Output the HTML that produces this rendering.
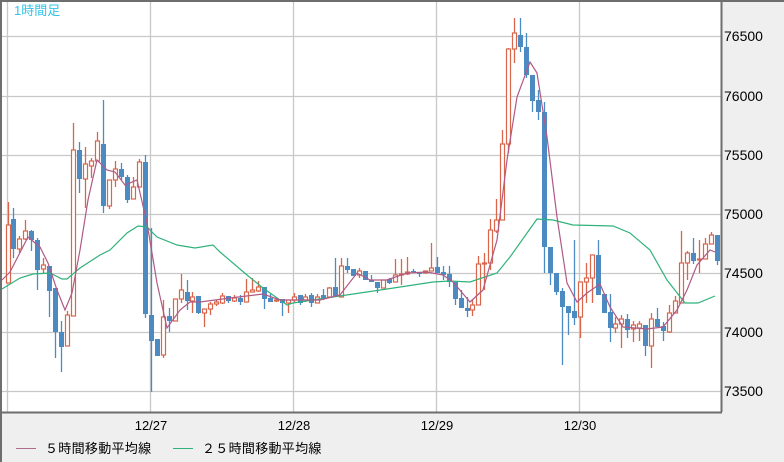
<!DOCTYPE html>
<html><head><meta charset="utf-8"><style>
html,body{margin:0;padding:0;background:#efefef;}
body{width:784px;height:462px;overflow:hidden;position:relative;font-family:"Liberation Sans","Noto Sans CJK JP",sans-serif;}
svg{position:absolute;left:0;top:0;}
</style></head><body>
<svg id="s" width="784" height="462" xmlns="http://www.w3.org/2000/svg">
<rect x="0" y="0" width="784" height="462" fill="#efefef"/>
<rect x="2" y="2" width="719" height="410" fill="#ffffff"/>
<g stroke="#c8c8c8" stroke-width="1.3">
<line x1="2" y1="36.5" x2="721" y2="36.5"/>
<line x1="2" y1="96.5" x2="721" y2="96.5"/>
<line x1="2" y1="155.5" x2="721" y2="155.5"/>
<line x1="2" y1="214.5" x2="721" y2="214.5"/>
<line x1="2" y1="273.5" x2="721" y2="273.5"/>
<line x1="2" y1="332.5" x2="721" y2="332.5"/>
<line x1="2" y1="391.5" x2="721" y2="391.5"/>
<line x1="7.5" y1="2" x2="7.5" y2="412"/>
<line x1="150.5" y1="2" x2="150.5" y2="412"/>
<line x1="293.5" y1="2" x2="293.5" y2="412"/>
<line x1="436.5" y1="2" x2="436.5" y2="412"/>
<line x1="579.5" y1="2" x2="579.5" y2="412"/>
</g>
<g id="c"></g>
<polyline fill="none" stroke="#2fb27a" stroke-width="1.2" points="2,289 20,278 33,274 50,273 62,279 67,279 80,268 100,255 110,250 127,233 138,226 147,227 157,237 177,245 195,248 213,245 220,252 247,275 263,288 287,305 293,303 333,297 387,289 433,282 450,281 470,282 497,273 510,257 537,219 553,220 573,225 613,226 630,233 650,250 667,280 685,303 698,303 715,296"/>
<polyline fill="none" stroke="#b05a86" stroke-width="1.2" points="2,280 10,272 28,237 40,247 48,263 57,290 65,310 72,293 80,250 88,200 97,160 107,170 115,172 125,185 137,180 147,223 157,283 167,328 180,310 190,302 200,302 230,298 263,294 280,300 293,300 320,300 340,295 357,273 370,280 387,280 407,273 427,272 443,275 453,282 470,302 483,290 497,240 507,160 517,97 530,62 537,73 547,137 557,217 567,283 577,302 587,293 600,284 610,307 623,327 647,329 663,327 677,310 687,290 697,265 710,250 715,252"/>
<g stroke="#6e6e6e" stroke-width="2" fill="none">
<line x1="0" y1="1" x2="784" y2="1"/>
<line x1="1" y1="0" x2="1" y2="462"/>
<line x1="721.5" y1="2" x2="721.5" y2="412"/>
<line x1="2" y1="412.5" x2="722" y2="412.5"/>
</g>
<text x="14" y="15" font-size="13" fill="#33c3e8" font-family="Liberation Sans,Noto Sans CJK JP,sans-serif">1時間足</text>
<g font-size="14" fill="#000" font-family="Liberation Sans,sans-serif">
<text x="724" y="41">76500</text>
<text x="724" y="101">76000</text>
<text x="724" y="160">75500</text>
<text x="724" y="219">75000</text>
<text x="724" y="278">74500</text>
<text x="724" y="337">74000</text>
<text x="724" y="396">73500</text>
</g>
<g font-size="13" fill="#000" font-family="Liberation Sans,sans-serif" text-anchor="middle">
<text x="151" y="430">12/27</text>
<text x="294" y="430">12/28</text>
<text x="437" y="430">12/29</text>
<text x="580" y="430">12/30</text>
</g>
<line x1="16" y1="448.5" x2="36" y2="448.5" stroke="#b06a8a" stroke-width="1"/>
<line x1="173" y1="448.5" x2="193" y2="448.5" stroke="#2fb27a" stroke-width="1"/>
<g font-size="13" fill="#000" font-family="Liberation Sans,Noto Sans CJK JP,sans-serif">
<text x="45" y="453" letter-spacing="0.3">５時間移動平均線</text>
<text x="202" y="453" letter-spacing="0.3">２５時間移動平均線</text>
</g>
</svg>
<script>
var D=[
[8,'u',225,283,202,283],[13,'d',219,249,208,258],[19,'u',239,249,236,253],[25,'u',231,239,220,240],[31,'d',231,240,230,251],[37,'d',240,270,238,290],[43,'u',265,269,258,273],[49,'d',266,291,266,317],[55,'d',288,332,288,358],[61,'d',332,347,321,372],[67,'u',315,346,311,346],[73,'u',150,316,123,316],[79,'d',150,179,142,193],[85,'u',164,179,147,208],[91,'u',161,166,158,178],[97,'u',141,161,132,161],[103,'d',144,206,100,213],[109,'u',180,206,180,209],[115,'u',169,180,161,187],[121,'d',169,177,163,180],[127,'d',177,200,175,203],[133,'u',187,199,177,199],[139,'u',162,187,159,187],[145,'d',162,314,155,318],[151,'d',315,341,228,392],[157,'d',339,356,339,356],[163,'u',317,355,300,358],[169,'d',316,321,308,332],[175,'u',299,321,299,321],[181,'u',290,299,274,303],[187,'d',292,301,280,310],[192,'u',297,301,292,313],[198,'d',296,313,296,314],[204,'u',309,313,309,327],[210,'u',304,309,302,315],[216,'u',302,304,300,306],[222,'u',296,303,293,304],[228,'d',296,301,296,303],[234,'u',298,301,295,302],[240,'d',298,302,295,305],[246,'u',292,302,279,302],[252,'u',290,292,278,292],[258,'u',287,291,281,292],[264,'d',287,299,287,309],[270,'d',298,302,294,302],[276,'u',300,301,298,302],[282,'d',299,303,299,316],[288,'u',300,303,300,313],[294,'u',297,300,293,302],[300,'d',295,303,295,305],[305,'u',297,300,294,302],[311,'d',295,303,293,307],[317,'u',297,303,294,303],[323,'d',295,298,289,300],[329,'u',288,297,287,298],[335,'d',287,297,258,297],[341,'u',266,297,258,297],[347,'d',266,270,258,273],[353,'d',269,276,269,276],[359,'u',271,275,268,278],[365,'d',271,280,271,280],[371,'d',280,282,275,282],[377,'d',282,288,282,293],[383,'u',280,288,280,288],[389,'d',279,283,278,284],[395,'u',275,282,259,282],[401,'u',274,275,259,285],[407,'u',272,274,257,275],[413,'d',271,272,269,273],[419,'d',272,274,272,277],[425,'u',271,273,271,273],[431,'u',268,271,243,271],[437,'d',267,273,257,273],[443,'d',272,275,266,280],[449,'d',274,282,266,287],[455,'d',282,299,282,305],[461,'d',298,308,290,308],[467,'d',308,311,297,317],[472,'u',305,310,300,316],[478,'u',264,305,256,305],[484,'u',263,264,253,290],[490,'u',230,263,219,270],[496,'u',220,231,199,233],[502,'u',144,220,130,220],[508,'u',49,144,48,153],[514,'u',33,49,18,63],[520,'d',35,47,18,52],[526,'d',47,75,33,78],[532,'d',75,101,75,112],[538,'d',100,112,90,120],[544,'d',112,247,102,273],[550,'d',247,273,247,285],[556,'d',273,292,273,295],[562,'d',291,307,288,365],[568,'d',306,313,306,335],[574,'d',311,318,240,325],[580,'u',282,317,282,338],[586,'u',278,282,263,303],[592,'u',255,278,255,303],[598,'d',255,295,240,295],[604,'d',294,313,294,313],[610,'d',312,328,294,342],[615,'u',324,328,317,333],[621,'u',319,324,315,348],[627,'d',319,330,314,338],[633,'u',325,329,321,342],[639,'u',324,328,321,341],[645,'d',325,346,325,356],[651,'u',319,346,313,368],[657,'d',319,327,308,327],[663,'d',326,331,322,341],[669,'u',313,332,305,333],[675,'u',301,313,296,313],[681,'u',263,303,231,303],[687,'u',253,263,251,280],[693,'d',253,261,238,264],[699,'u',259,260,240,273],[705,'u',244,259,238,259],[711,'u',235,244,232,244],[717,'d',235,261,235,265]];
var g=document.getElementById('c'),ns='http://www.w3.org/2000/svg',h='';
D.forEach(function(c){var x=c[0],col=c[1]=='u'?'#d9654b':'#4b8bc2';
h+='<line x1="'+(x+0.5)+'" x2="'+(x+0.5)+'" y1="'+c[4]+'" y2="'+c[5]+'" stroke="'+col+'" stroke-width="1.3"/>';
var t=c[2],b=Math.max(c[3],c[2]+1);
if(c[1]=='u')h+='<rect x="'+(x-1.5)+'" y="'+t+'" width="4" height="'+(b-t)+'" fill="#fff" stroke="'+col+'" stroke-width="1.2"/>';
else h+='<rect x="'+(x-2)+'" y="'+t+'" width="5" height="'+(b-t)+'" fill="'+col+'"/>';});
g.innerHTML=h;
</script>
</body></html>
